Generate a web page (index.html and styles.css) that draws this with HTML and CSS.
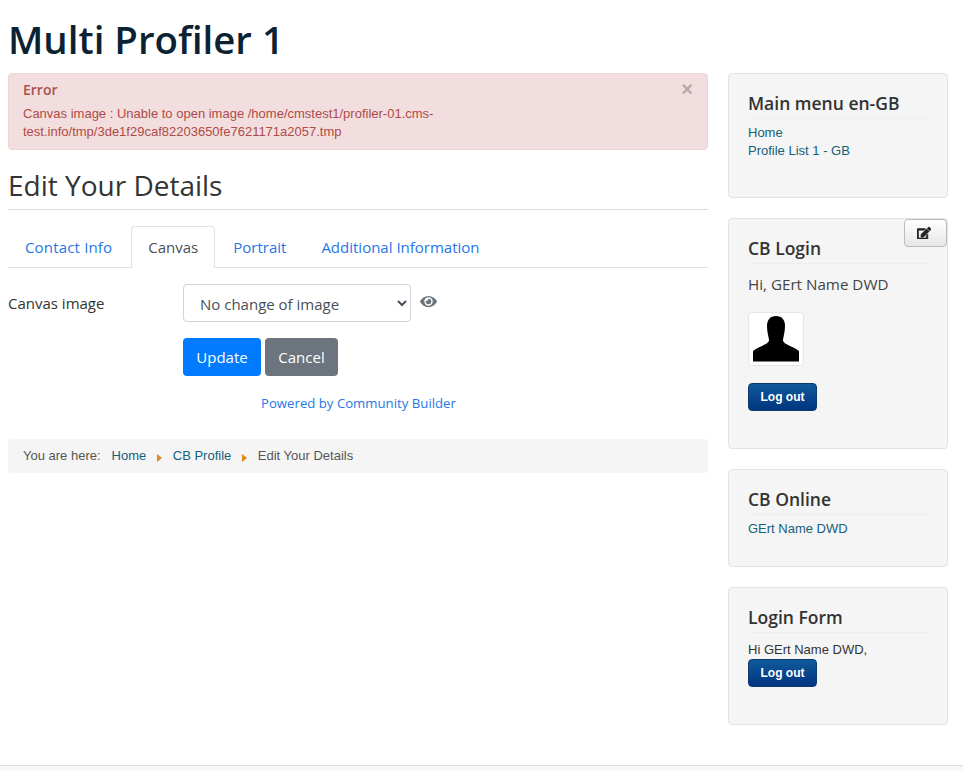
FILE: index.html
```html
<!DOCTYPE html>
<html lang="en">
<head>
<meta charset="utf-8">
<title>Multi Profiler 1</title>
<link rel="stylesheet" href="styles.css">
</head>
<body>
<header class="site-header"><h1 class="site-title">Multi Profiler 1</h1></header>
<div class="layout">
  <main class="main">
    <div class="alert">
      <span class="alert-close">×</span>
      <h4 class="alert-title">Error</h4>
      <p class="alert-text">Canvas image : Unable to open image /home/cmstest1/profiler-01.cms-<br>test.info/tmp/3de1f29caf82203650fe7621171a2057.tmp</p>
    </div>
    <h2 class="page-title">Edit Your Details</h2>
    <ul class="tabs">
      <li class="tab tab-first"><a href="#">Contact Info</a></li>
      <li class="tab tab-active"><a href="#">Canvas</a></li>
      <li class="tab tab-portrait"><a href="#">Portrait</a></li>
      <li class="tab"><a href="#">Additional Information</a></li>
    </ul>
    <div class="form-row">
      <label class="form-label">Canvas image</label>
      <select class="form-select"><option>No change of image</option></select>
      <svg class="eye" viewBox="0 0 576 512" width="17" height="15"><path fill="#6c757d" d="M572.5 241.4C518.3 135.6 410.9 64 288 64S57.7 135.6 3.5 241.4a32.4 32.4 0 0 0 0 29.2C57.7 376.4 165.1 448 288 448s230.3-71.6 284.5-177.4a32.4 32.4 0 0 0 0-29.2zM288 400a144 144 0 1 1 144-144 143.9 143.9 0 0 1-144 144zm0-240a95.3 95.3 0 0 0-25.3 3.8 47.9 47.9 0 0 1-66.9 66.9A95.8 95.8 0 1 0 288 160z"/></svg>
    </div>
    <div class="form-actions">
      <button class="btn btn-primary">Update</button>
      <button class="btn btn-secondary">Cancel</button>
    </div>
    <div class="powered"><a href="#">Powered by Community Builder</a></div>
    <nav class="breadcrumb">
      <span class="crumb-label">You are here:</span>
      <a href="#">Home</a><span class="crumb-sep"></span>
      <a href="#">CB Profile</a><span class="crumb-sep"></span>
      <span>Edit Your Details</span>
    </nav>
  </main>
  <aside class="sidebar">
    <section class="well well-menu">
      <h3 class="well-title">Main menu en-GB</h3>
      <ul class="menu"><li><a href="#">Home</a></li><li><a href="#">Profile List 1 - GB</a></li></ul>
    </section>
    <section class="well well-login">
      <button class="edit-btn" aria-label="Edit">
        <svg viewBox="0 0 576 512" width="14" height="12.500"><path fill="#222" stroke="#222" stroke-width="24" d="M402.6 83.2l90.2 90.2c3.8 3.8 3.8 10 0 13.8L274.4 405.6l-92.8 10.3c-12.4 1.4-22.9-9.1-21.5-21.5l10.3-92.8L388.8 83.2c3.8-3.8 10-3.8 13.8 0zm162-22.9l-48.8-48.8c-15.2-15.2-39.9-15.2-55.2 0l-35.4 35.4c-3.8 3.8-3.8 10 0 13.8l90.2 90.2c3.8 3.8 10 3.8 13.8 0l35.4-35.4c15.2-15.3 15.2-40 0-55.2zM384 346.2V448H64V128h229.8c3.2 0 6.2-1.3 8.5-3.5l40-40c7.6-7.6 2.2-20.5-8.5-20.500H48C21.5 64 0 85.5 0 112v352c0 26.5 21.5 48 48 48h352c26.5 0 48-21.500 48-48V306.2c0-10.7-12.9-16-20.5-8.5l-40 40c-2.2 2.3-3.5 5.3-3.5 8.5z"/></svg>
      </button>
      <h3 class="well-title">CB Login</h3>
      <p class="greeting">Hi, GErt Name DWD</p>
      <div class="avatar">
        <svg viewBox="0 0 46 45.500" width="46" height="45.500"><path fill="#000" d="M23 0C29 0 32 4 32 10C32 16 30.500 20 30 24C30 26.500 33 28 37 30C41 32 44 33 46 35V45.500H0V35C2 33 5 32 9 30C13 28 16 26.500 16 24C15.500 20 14 16 14 10C14 4 17 0 23 0Z"/></svg>
      </div>
      <button class="logout logout-cb">Log out</button>
    </section>
    <section class="well well-online">
      <h3 class="well-title">CB Online</h3>
      <ul class="menu"><li><a href="#">GErt Name DWD</a></li></ul>
    </section>
    <section class="well well-form">
      <h3 class="well-title">Login Form</h3>
      <div class="hi">Hi GErt Name DWD,</div>
      <button class="logout">Log out</button>
    </section>
  </aside>
</div>
<footer class="footer"></footer>
</body>
</html>
```

FILE: styles.css
```css
* { box-sizing: border-box; }
html, body { margin: 0; padding: 0; }
body {
  height: 771px;
  overflow: hidden;
  background: #fff;
  color: #333;
  font-family: "Open Sans", sans-serif;
  font-size: 15px;
  position: relative;
}
a { text-decoration: none; }
ul { list-style: none; margin: 0; padding: 0; }

.site-header { padding: 13px 8px 0; height: 73px; }
.site-title {
  margin: 0;
  font-size: 38.4px;
  line-height: 52px;
  font-weight: 600;
  color: #0b2233;
}

.layout { display: flex; padding: 0 15px 0 8px; gap: 20px; }
.main { width: 700px; }
.sidebar { width: 220px; display: flex; flex-direction: column; gap: 20px; }

.alert {
  position: relative;
  height: 77px;
  padding: 7px 14px;
  background: #f2dede;
  border: 1px solid #eed3d7;
  border-radius: 4px;
  color: #b04a48;
  font-family: "Liberation Sans", sans-serif;
  font-size: 13px;
  line-height: 18px;
}
.alert-close {
  position: absolute;
  top: 5px;
  right: 14px;
  font-family: "Liberation Sans", sans-serif;
  font-size: 20px;
  font-weight: 700;
  line-height: 20px;
  color: #b9a9a9;
}
.alert-title {
  margin: 0 0 6px;
  font-family: "Open Sans", sans-serif;
  font-size: 14px;
  font-weight: 600;
  line-height: 18px;
  color: #a8514f;
}
.alert-text { margin: 0; }

.page-title {
  margin: 0;
  height: 60px;
  padding-top: 16px;
  border-bottom: 1px solid #ddd;
  font-size: 28px;
  font-weight: 400;
  line-height: 38px;
  color: #333;
}

.tabs {
  display: flex;
  margin-top: 16px;
  height: 42px;
  border-bottom: 1px solid #dee2e6;
}
.tab a {
  display: block;
  height: 42px;
  padding: 9px 17px;
  border: 1px solid transparent;
  border-bottom: 0;
  border-radius: 4px 4px 0 0;
  color: #2677e6;
  font-size: 15px;
  line-height: 22px;
}
.tab-first a { padding: 9px 18px 9px 16px; letter-spacing: 0.17px; }
.tab-active a {
  padding: 9px 16px;
  background: #fff;
  border-color: #dee2e6;
  color: #495057;
}
.tab-portrait a { padding-right: 16px; }

.form-row { display: flex; align-items: flex-start; margin-top: 16px; }
.form-label { width: 175px; padding-top: 8px; line-height: 22px; color: #333; }
.form-select {
  width: 228px;
  height: 38px;
  padding: 2px 12px 0;
  background: #fff;
  border: 1px solid #ced4da;
  border-radius: 4px;
  color: #495057;
  font-family: "Open Sans", sans-serif;
  font-size: 15px;
}
.eye { margin: 10px 0 0 9px; }

.form-actions { display: flex; gap: 4px; margin: 16px 0 0 175px; }
.btn {
  height: 38px;
  padding: 0 12px;
  border: 1px solid transparent;
  border-radius: 4px;
  color: #fff;
  font-family: "Open Sans", sans-serif;
  font-size: 15px;
}
.btn-primary { background: #007bff; width: 78px; }
.btn-secondary { background: #6c757d; width: 73px; }

.powered { margin: 17px 0 0 253px; font-size: 13.2px; line-height: 20px; }
.powered a { color: #2677e6; }

.breadcrumb {
  display: flex;
  align-items: center;
  height: 34px;
  margin-top: 26px;
  padding: 0 15px 2px;
  background: #f5f5f5;
  border-radius: 4px;
  color: #555;
  font-family: "Liberation Sans", sans-serif;
  font-size: 13px;
}
.breadcrumb a { color: #15607a; }
.crumb-label { margin-right: 11px; }
.crumb-sep {
  width: 0;
  height: 0;
  margin: 5px 10.5px 0 11px;
  border-left: 5px solid #e08a1e;
  border-top: 4px solid transparent;
  border-bottom: 4px solid transparent;
}

.well {
  position: relative;
  padding: 16px 19px;
  background: #f5f5f5;
  border: 1px solid #e3e3e3;
  border-radius: 4px;
}
.well-menu { height: 125px; }
.well-login { height: 231px; }
.well-online { height: 98px; }
.well-form { height: 138px; }
.well-title {
  margin: 0 0 5px;
  padding-bottom: 1px;
  border-bottom: 1px solid #eee;
  font-size: 17.5px;
  font-weight: 600;
  line-height: 27px;
  color: #333;
}
.menu {
  font-family: "Liberation Sans", sans-serif;
  font-size: 13px;
  line-height: 18px;
}
.menu a { color: #15607a; }

.edit-btn {
  position: absolute;
  top: 0;
  right: 0;
  width: 43px;
  height: 28px;
  display: flex;
  align-items: center;
  justify-content: center;
  padding: 0 3px 0 0;
  background: linear-gradient(#fff, #e6e6e6);
  border: 1px solid #bbb;
  border-radius: 4px;
}
.greeting { margin: 10px 0 18px; font-size: 15.2px; line-height: 20px; color: #444; }
.avatar {
  display: flex;
  align-items: center;
  justify-content: center;
  width: 56px;
  height: 54px;
  background: #fff;
  border: 1px solid #e6e6e6;
  border-radius: 4px;
}
.logout {
  display: block;
  width: 69px;
  height: 28px;
  padding: 0;
  background: linear-gradient(#10599b, #003580);
  border: 1px solid #0b3a6f;
  border-radius: 4px;
  color: #fff;
  font-family: "Liberation Sans", sans-serif;
  font-size: 12px;
  font-weight: 700;
}
.logout-cb { margin-top: 17px; }
.hi {
  font-family: "Liberation Sans", sans-serif;
  font-size: 13px;
  line-height: 18px;
  color: #333;
}
.well-form .well-title { margin-bottom: 8px; }

.footer {
  position: absolute;
  left: 0;
  right: 0;
  bottom: 0;
  height: 6px;
  background: #f8f8f8;
  border-top: 1px solid #ddd;
}
```
